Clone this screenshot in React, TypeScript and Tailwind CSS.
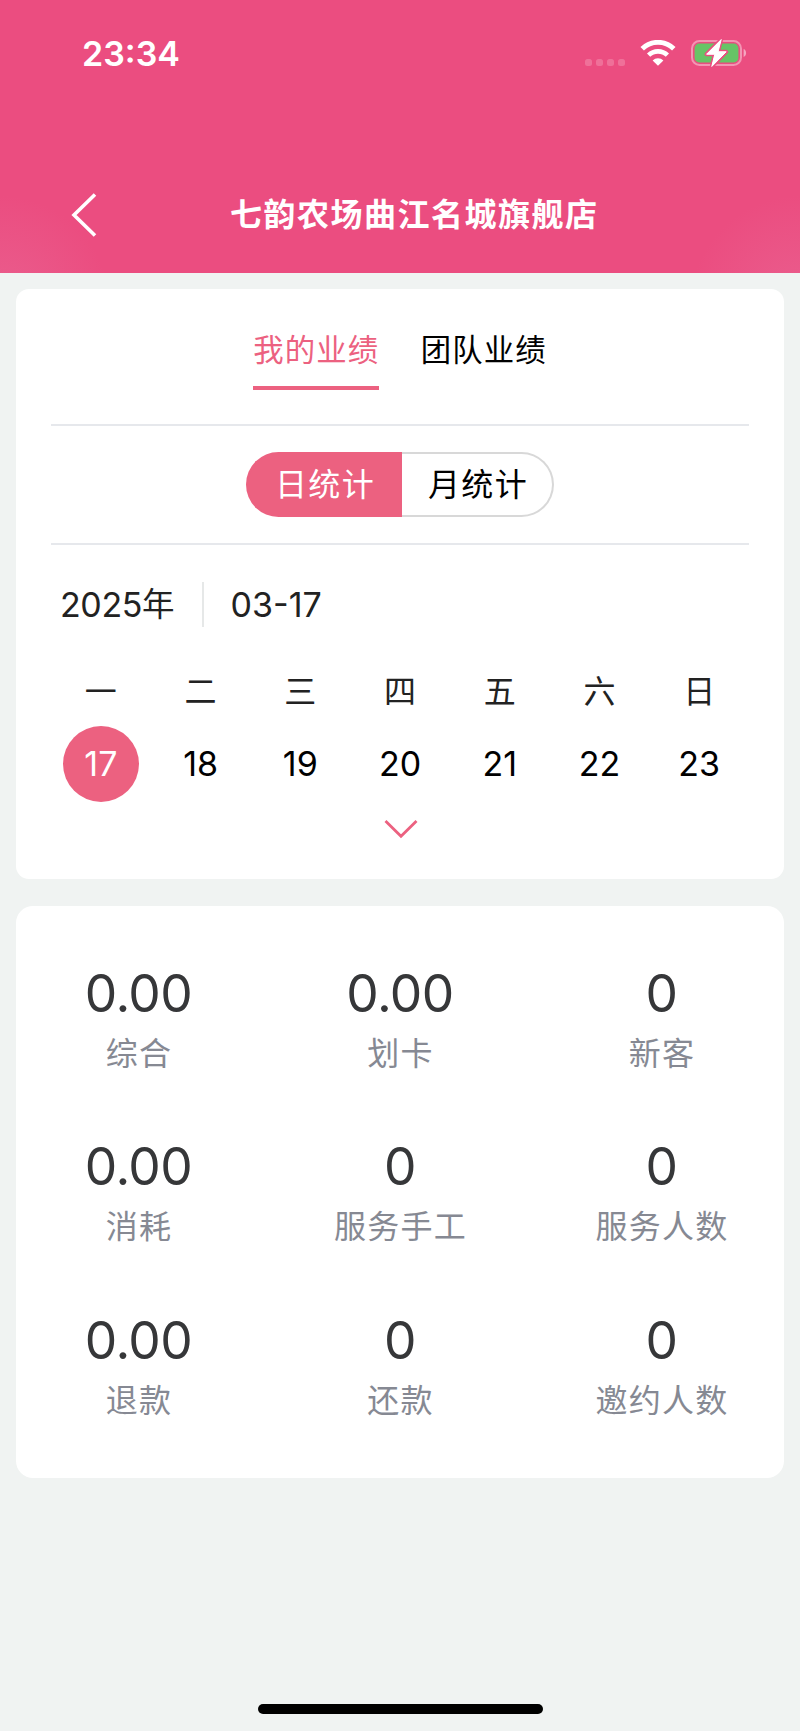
import React, { useState } from "react";
import { clsx } from "clsx";

const tabs = ["我的业绩", "团队业绩"];

const week = [
  { label: "一", day: 17 },
  { label: "二", day: 18 },
  { label: "三", day: 19 },
  { label: "四", day: 20 },
  { label: "五", day: 21 },
  { label: "六", day: 22 },
  { label: "日", day: 23 },
];

const stats = [
  { value: "0.00", label: "综合" },
  { value: "0.00", label: "划卡" },
  { value: "0", label: "新客" },
  { value: "0.00", label: "消耗" },
  { value: "0", label: "服务手工" },
  { value: "0", label: "服务人数" },
  { value: "0.00", label: "退款" },
  { value: "0", label: "还款" },
  { value: "0", label: "邀约人数" },
];

const WifiIcon = () => (
  <svg width="36" height="26" viewBox="0 0 36 26" fill="none">
    <path d="M2.2 8.8a22.6 22.6 0 0 1 31.6 0" stroke="#fff" strokeWidth="5" />
    <path d="M8.6 15.2a13.4 13.4 0 0 1 18.8 0" stroke="#fff" strokeWidth="4.6" />
    <path d="M18 25.8l-5.4-5.4a7.8 7.8 0 0 1 10.8 0z" fill="#fff" />
  </svg>
);

const BatteryIcon = () => (
  <svg width="58" height="30" viewBox="0 0 58 30" fill="none">
    <rect x="2" y="3" width="49" height="24" rx="7.5" stroke="#fff" strokeOpacity="0.4" strokeWidth="2" />
    <path d="M53.6 11v8c1.6-.6 2.5-2.2 2.5-4s-.9-3.4-2.5-4z" fill="#fff" fillOpacity="0.5" />
    <rect x="4.6" y="5.6" width="43.8" height="18.8" rx="4.5" fill="#67c466" />
    <path
      d="M31.2 1.6L16.6 16.2h8.2L21.8 28.4 36.2 13.8H28z"
      fill="#fff"
      stroke="#eb4d80"
      strokeWidth="4"
      strokeLinejoin="round"
      paintOrder="stroke"
    />
    <path
      d="M31.2 1.6L16.6 16.2h8.2L21.8 28.4 36.2 13.8H28z"
      fill="#fff"
      stroke="#fff"
      strokeWidth="1"
      strokeLinejoin="round"
    />
  </svg>
);

const StatusBar = () => (
  <div className="flex h-[106px] items-center justify-between pl-[82px] pr-[53px]">
    <span className="mt-px text-[34px] font-semibold leading-none">23:34</span>
    <div className="flex items-center">
      <div className="mr-[15px] mt-[18px] flex gap-1">
        {[0, 1, 2, 3].map((i) => (
          <div key={i} className="size-[7px] rounded-[2.5px] bg-white/20" />
        ))}
      </div>
      <WifiIcon />
      <div className="ml-[14px] -mr-px">
        <BatteryIcon />
      </div>
    </div>
  </div>
);

const Divider = () => <div className="h-[2px] bg-[#e6e8ec]" />;

export default function App() {
  const [tab, setTab] = useState(0);
  const [mode, setMode] = useState<"day" | "month">("day");
  const [selected, setSelected] = useState(17);

  return (
    <div className="flex h-[1731px] w-[800px] flex-col overflow-hidden bg-[#f0f3f2] font-[Inter,'Noto_Sans_CJK_SC',sans-serif]">
      {/* Header */}
      <header className="h-[272.5px] shrink-0 bg-[#eb4d80] bg-[radial-gradient(circle_at_0%_112%,#ea5e8e_0%,#eb4d8000_110px),radial-gradient(circle_at_100%_112%,#ea5e8e_0%,#eb4d8000_110px)] text-white">
        <StatusBar />
        <div className="mt-[87px] flex h-11 items-center pl-[71px]">
          <svg width="26" height="44" viewBox="0 0 26 44" fill="none">
            <path d="M24 1.5L3 22l21 20.5" stroke="#fff" strokeWidth="3.6" />
          </svg>
          <h1 className="ml-[133px] text-[32px] font-bold leading-[44px] tracking-[1.5px]">
            七韵农场曲江名城旗舰店
          </h1>
        </div>
      </header>

      {/* Filters */}
      <section className="mx-4 mt-[16.5px] h-[590px] shrink-0 rounded-[13px] bg-white px-[35px]">
        <div className="flex h-[135px] justify-center gap-[41.5px]">
          {tabs.map((name, i) => (
            <button
              key={name}
              onClick={() => setTab(i)}
              className={clsx(
                "mt-[33px] h-[68px] border-b-4 pb-[8px] text-[30.4px] leading-[56px] tracking-[1.1px]",
                tab === i ? "border-[#ec6180] text-[#ec6180]" : "border-transparent text-black"
              )}
            >
              {name}
            </button>
          ))}
        </div>
        <Divider />

        <div className="flex h-[117px] items-center justify-center text-[32px] leading-[60px] tracking-[1.4px]">
          <button
            onClick={() => setMode("day")}
            className={clsx(
              "h-[65px] w-[156px] rounded-l-full border-2 border-r-0 pt-[1px]",
              mode === "day" ? "border-[#ec6180] bg-[#ec6180] text-white" : "border-[#d8d8d8]"
            )}
          >
            日统计
          </button>
          <button
            onClick={() => setMode("month")}
            className={clsx(
              "h-[65px] w-[152px] rounded-r-full border-2 border-l-0 pl-[2px] pt-[1px]",
              mode === "month" ? "border-[#ec6180] bg-[#ec6180] text-white" : "border-[#d8d8d8] text-black"
            )}
          >
            月统计
          </button>
        </div>
        <Divider />

        <div className="mt-[37px] flex h-[45px] items-center pl-[9px] text-[34px] leading-[45px] tracking-[-0.4px] text-[#222]">
          <span className="flex">
            2025<span className="text-[32.5px]">年</span>
          </span>
          <div className="ml-[28px] mr-[26.5px] h-[45px] w-[2px] bg-[#e6e8e8]" />
          <span className="tracking-normal">03-17</span>
        </div>

        <div className="mt-[41px] grid grid-cols-7 text-center">
          {week.map(({ label, day }) => (
            <div key={day} className="flex flex-col items-center">
              <span className="text-[32px] leading-[48px] text-[#222]">{label}</span>
              <button
                onClick={() => setSelected(day)}
                className={clsx(
                  "mt-[10px] size-[76px] rounded-full pb-px text-[34px] leading-none",
                  selected === day ? "bg-[#ec6180] text-white" : "text-black"
                )}
              >
                {day}
              </button>
            </div>
          ))}
        </div>

        <div className="mt-[16.5px] flex justify-center pl-[1px]">
          <svg width="34" height="20" viewBox="0 0 34 20" fill="none">
            <path d="M1.5 2L17 17.2 32.5 2" stroke="#ec6180" strokeWidth="2.8" />
          </svg>
        </div>
      </section>

      {/* Totals */}
      <section className="mx-4 mt-[27px] grid h-[572px] shrink-0 auto-rows-[173.3px] grid-cols-[repeat(3,261.5px)] justify-center rounded-[17px] bg-white pt-[54px]">
        {stats.map(({ value, label }) => (
          <div key={label} className="flex flex-col items-center">
            <span className="text-[51.5px] leading-[66px] tracking-[-0.6px] text-[#363739]">{value}</span>
            <span className="mt-[2px] pl-px text-[32px] leading-[52px] tracking-[1.3px] text-[#868993]">{label}</span>
          </div>
        ))}
      </section>

      {/* Home indicator */}
      <div className="mx-auto mb-[17px] mt-auto h-[10px] w-[285px] shrink-0 rounded-full bg-black" />
    </div>
  );
}
